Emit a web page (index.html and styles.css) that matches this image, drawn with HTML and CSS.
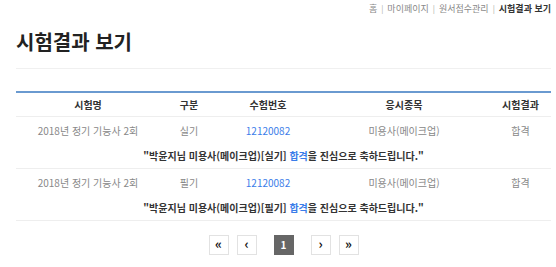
FILE: index.html
```html
<!DOCTYPE html>
<html lang="ko">
<head>
  <meta charset="UTF-8" />
  <meta name="viewport" content="width=device-width, initial-scale=1.0"/>
  <title>시험결과 보기</title>
  <link rel="stylesheet" href="styles.css">
</head>
<body>
  <div class="wrap">
    <div class="location">
      <a href="#">홈</a><span class="bar">|</span><a href="#">마이페이지</a><span class="bar">|</span><a href="#">원서접수관리</a><span class="bar">|</span><strong>시험결과 보기</strong>
    </div>
    <h1 class="title">시험결과 보기</h1>

    <table class="result">
      <colgroup>
        <col style="width:144px">
        <col style="width:58px">
        <col style="width:100px">
        <col style="width:172px">
        <col>
      </colgroup>
      <thead>
        <tr>
          <th>시험명</th>
          <th>구분</th>
          <th>수험번호</th>
          <th>응시종목</th>
          <th>시험결과</th>
        </tr>
      </thead>
      <tbody>
        <tr class="info">
          <td>2018년 정기 기능사 2회</td>
          <td>실기</td>
          <td><a href="#">12120082</a></td>
          <td>미용사(메이크업)</td>
          <td>합격</td>
        </tr>
        <tr class="msg">
          <td colspan="5">"박윤지님 미용사(메이크업)[실기] <em>합격</em>을 진심으로 축하드립니다."</td>
        </tr>
        <tr class="info">
          <td>2018년 정기 기능사 2회</td>
          <td>필기</td>
          <td><a href="#">12120082</a></td>
          <td>미용사(메이크업)</td>
          <td>합격</td>
        </tr>
        <tr class="msg">
          <td colspan="5">"박윤지님 미용사(메이크업)[필기] <em>합격</em>을 진심으로 축하드립니다."</td>
        </tr>
      </tbody>
    </table>

    <div class="paging">
      <a href="#" class="btn">&laquo;</a>
      <a href="#" class="btn">&lsaquo;</a>
      <span class="num on">1</span>
      <a href="#" class="btn">&rsaquo;</a>
      <a href="#" class="btn">&raquo;</a>
    </div>
  </div>
</body>
</html>
```

FILE: styles.css
```css
body {
  margin: 0;
  font-family: "Noto Sans CJK KR", "Noto Sans", sans-serif;
  color: #333;
  background-color: #fff;
}
a {
  text-decoration: none;
}
.wrap {
  padding: 0 5px 0 16px;
}
.location {
  text-align: right;
  font-size: 9px;
  line-height: 12px;
  padding-top: 3px;
  color: #888;
}
.location a {
  color: #888;
}
.location .bar {
  margin: 0 4px;
  color: #aaa;
  font-size: 8px;
}
.location strong {
  color: #333;
}
.title {
  margin: 14px 0 0;
  padding-bottom: 14px;
  font-size: 20px;
  line-height: 25px;
  color: #222;
  border-bottom: 1px solid #f0f0f0;
}
.result {
  width: 535px;
  margin-top: 22px;
  border-collapse: collapse;
  table-layout: fixed;
  border-top: 2px solid #6a9ad0;
  font-size: 10px;
}
.result th {
  height: 23px;
  padding: 0;
  font-weight: bold;
  color: #333;
  border-bottom: 1px solid #eee;
}
.result td {
  padding: 0;
  text-align: center;
  color: #888;
}
.result .info td {
  height: 26px;
}
.result .info a {
  color: #3b7de9;
}
.result .msg td {
  height: 25px;
  font-weight: bold;
  color: #333;
  border-bottom: 1px solid #eee;
}
.result .msg em {
  font-style: normal;
  color: #3b7de9;
}
.paging {
  display: flex;
  justify-content: center;
  align-items: center;
  gap: 8px;
  margin-top: 14px;
}
.paging .btn,
.paging .num {
  display: flex;
  align-items: center;
  justify-content: center;
  box-sizing: border-box;
  width: 20px;
  height: 20px;
  border: 1px solid #e2e2e2;
  color: #111;
  font-size: 13px;
  font-weight: bold;
  line-height: 1;
}
.paging .btn {
  padding-bottom: 3px;
}
.paging .num {
  margin: 0 9px;
  font-size: 10px;
}
.paging .on {
  background-color: #666;
  border-color: #666;
  color: #fff;
}
```
